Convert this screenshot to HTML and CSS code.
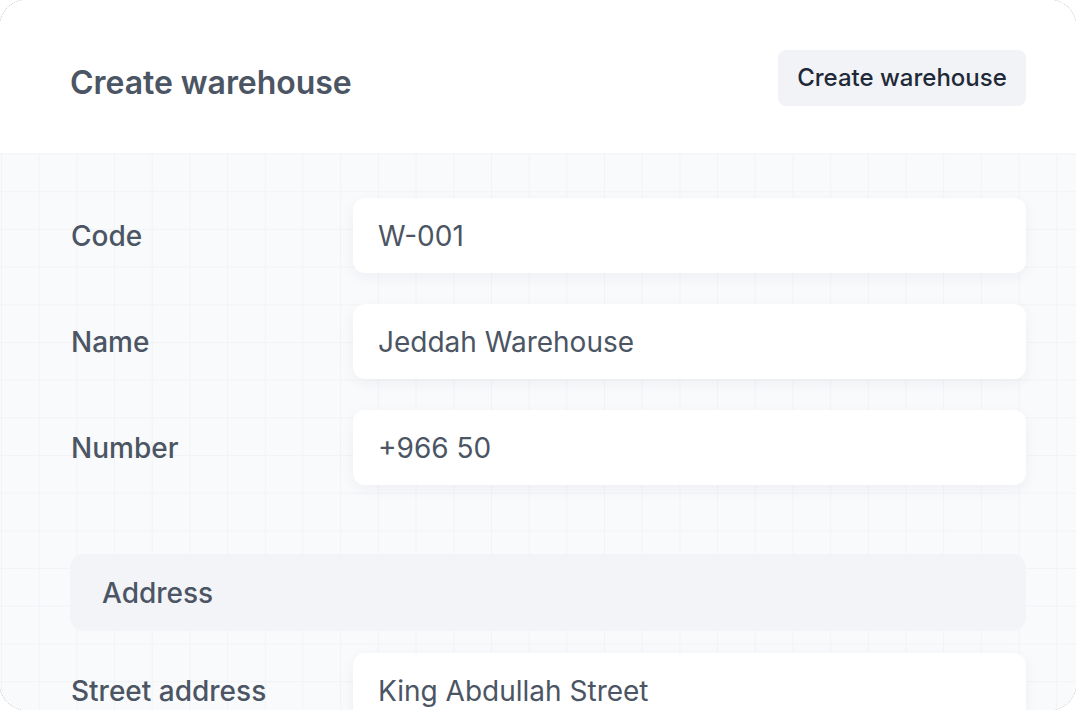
FILE: index.html
```html
<!DOCTYPE html>
<html lang="en">
<head>
    <meta charset="UTF-8">
    <title>Create warehouse</title>
    <link rel="stylesheet" href="styles.css">
</head>
<body>
    <div class="panel">
        <div class="panel-header">
            <h1>Create warehouse</h1>
            <button class="btn">Create warehouse</button>
        </div>
        <div class="panel-body">
            <div class="field">
                <label>Code</label>
                <div class="input">W-001</div>
            </div>
            <div class="field">
                <label>Name</label>
                <div class="input">Jeddah Warehouse</div>
            </div>
            <div class="field">
                <label>Number</label>
                <div class="input">+966 50</div>
            </div>

            <div class="section">Address</div>

            <div class="field">
                <label>Street address</label>
                <div class="input">King Abdullah Street</div>
            </div>
        </div>
    </div>
</body>
</html>
```

FILE: styles.css
```css
* {
    box-sizing: border-box;
}

html, body {
    height: 100%;
}

body {
    margin: 0;
    background: #fff;
    font-family: Inter, "Noto Sans", sans-serif;
    color: #4b5563;
    overflow: hidden;
}

/* slightly wider than the window so only the rounded corners show their border */
.panel {
    width: 1078px;
    height: 712px;
    margin: -1px;
    border: 1px dotted #c4c8cf;
    border-radius: 28px;
    overflow: hidden;
    display: flex;
    flex-direction: column;
}

.panel-header {
    height: 153px;
    flex-shrink: 0;
    background: #fff;
    display: flex;
    align-items: center;
    justify-content: space-between;
    padding: 0 50px 0 70px;
}

.panel-header h1 {
    margin: 11px 0 0;
    font-size: 32px;
    font-weight: 600;
    color: #4b5563;
    letter-spacing: -0.05px;
}

.btn {
    height: 56px;
    width: 248px;
    border: 0;
    border-radius: 8px;
    background: #f1f3f7;
    font-family: inherit;
    font-size: 24px;
    font-weight: 500;
    color: #1f2937;
    margin-top: 2px;
}

.panel-body {
    flex: 1;
    background-color: #f9fafc;
    background-image:
        linear-gradient(to right, #f2f3f6 1px, transparent 1px),
        linear-gradient(to bottom, #f2f3f6 1px, transparent 1px);
    background-size: 37.7px 37.7px;
    background-position: 1px 0.5px;
    padding: 45px 50px 0 71px;
}

.field {
    display: grid;
    grid-template-columns: 282px 1fr;
    align-items: center;
    margin-bottom: 31px;
}

.field label {
    font-size: 28px;
    font-weight: 500;
    color: #4b5563;
}

.input {
    height: 75px;
    background: #fff;
    border-radius: 12px;
    box-shadow: 0 4px 14px rgba(30, 41, 59, 0.05);
    padding: 0 25px;
    display: flex;
    align-items: center;
    font-size: 28px;
    color: #4b5563;
}

.section {
    margin: 69px 0 22px -1px;
    height: 77px;
    background: #f3f4f8;
    border-radius: 14px;
    padding: 0 32px;
    display: flex;
    align-items: center;
    font-size: 28px;
    font-weight: 500;
    color: #4b5563;
}
```
